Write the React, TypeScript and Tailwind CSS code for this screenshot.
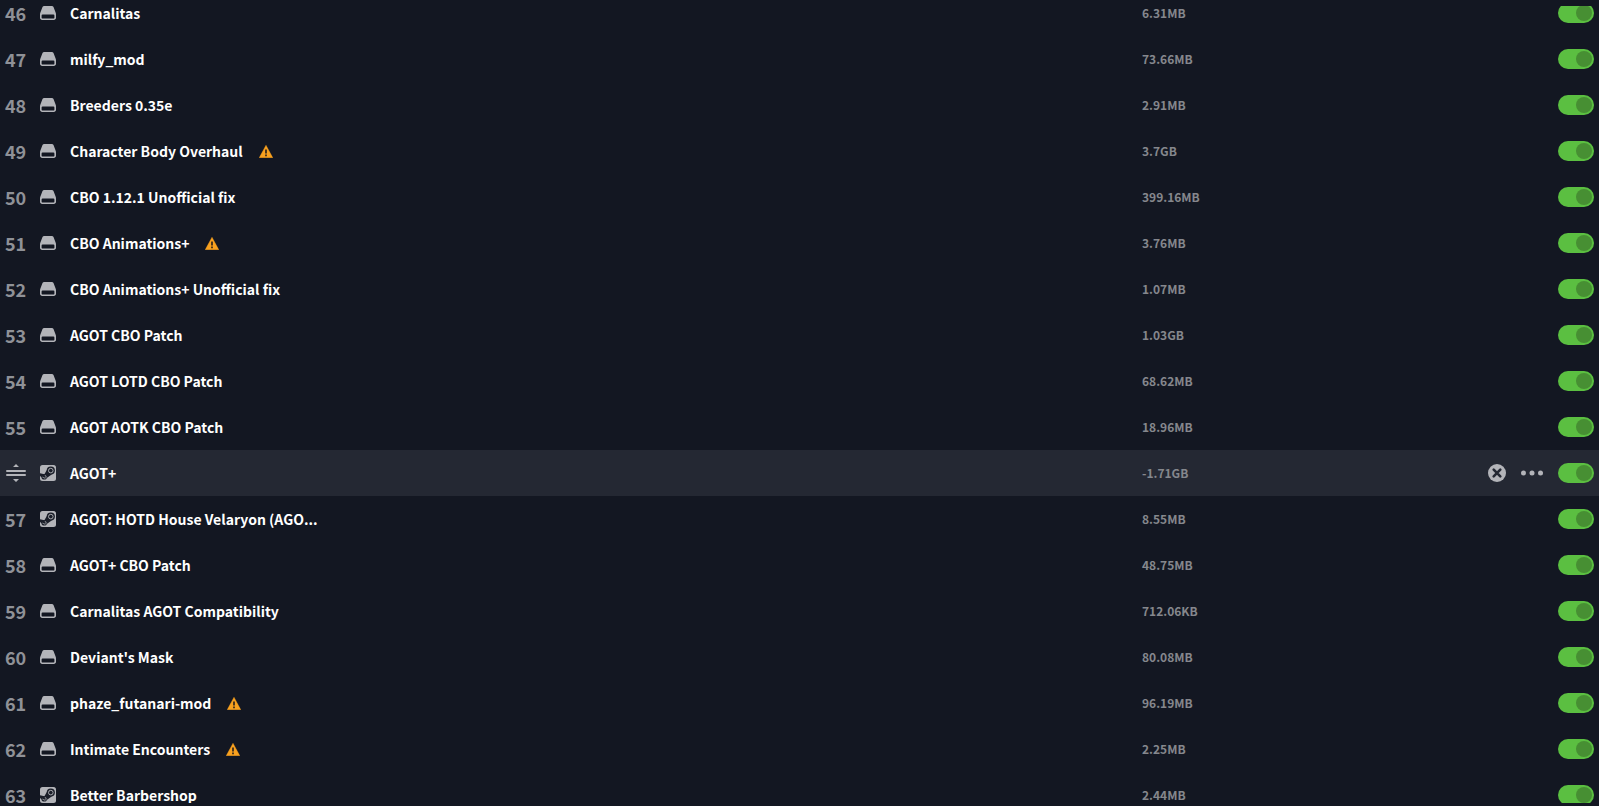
import { useState } from 'react';

type Mod = {
  position: number;
  name: string;
  size: string;
  source: 'local' | 'steam';
  warning?: boolean;
  active?: boolean;
};

const mods: Mod[] = [
  { position: 46, name: 'Carnalitas', size: '6.31MB', source: 'local' },
  { position: 47, name: 'milfy_mod', size: '73.66MB', source: 'local' },
  { position: 48, name: 'Breeders 0.35e', size: '2.91MB', source: 'local' },
  { position: 49, name: 'Character Body Overhaul', size: '3.7GB', source: 'local', warning: true },
  { position: 50, name: 'CBO 1.12.1 Unofficial fix', size: '399.16MB', source: 'local' },
  { position: 51, name: 'CBO Animations+', size: '3.76MB', source: 'local', warning: true },
  { position: 52, name: 'CBO Animations+ Unofficial fix', size: '1.07MB', source: 'local' },
  { position: 53, name: 'AGOT CBO Patch', size: '1.03GB', source: 'local' },
  { position: 54, name: 'AGOT LOTD CBO Patch', size: '68.62MB', source: 'local' },
  { position: 55, name: 'AGOT AOTK CBO Patch', size: '18.96MB', source: 'local' },
  { position: 56, name: 'AGOT+', size: '-1.71GB', source: 'steam', active: true },
  { position: 57, name: 'AGOT: HOTD House Velaryon (AGO...', size: '8.55MB', source: 'steam' },
  { position: 58, name: 'AGOT+ CBO Patch', size: '48.75MB', source: 'local' },
  { position: 59, name: 'Carnalitas AGOT Compatibility', size: '712.06KB', source: 'local' },
  { position: 60, name: "Deviant's Mask", size: '80.08MB', source: 'local' },
  { position: 61, name: 'phaze_futanari-mod', size: '96.19MB', source: 'local', warning: true },
  { position: 62, name: 'Intimate Encounters', size: '2.25MB', source: 'local', warning: true },
  { position: 63, name: 'Better Barbershop', size: '2.44MB', source: 'steam' },
];

function DriveIcon() {
  return (
    <svg viewBox="0 0 16 16" className="size-4 shrink-0" aria-hidden="true">
      <path
        fill="#b3b4b9"
        fillRule="evenodd"
        d="M4.200 1h7.600c.8 0 1.400.4 1.700 1.100l2.100 5.300c.3.700.4 1.300.4 2v3.400c0 1.300-1 2.200-2.200 2.200H2.200C1 15 0 14.100 0 12.800V9.400c0-.7.1-1.300.4-2l2.100-5.300C2.800 1.400 3.400 1 4.200 1ZM2.500 9.600c-.5 0-.9.4-.9.9v2c0 .6.4 1.100 1 1.100h10.800c.6 0 1-.5 1-1.100v-2c0-.5-.4-.9-.9-.9h-11Z"
      />
    </svg>
  );
}

function SteamIcon() {
  return (
    <svg viewBox="0 0 16 16" className="size-4 shrink-0" aria-hidden="true">
      <rect width="16" height="16" rx="2.500" fill="#b3b4b9" />
      <g fill="#1a1e29">
        <circle cx="10.800" cy="5.600" r="4.100" />
        <circle cx="4.200" cy="11.900" r="2.700" />
        <path d="M6.700 5.300 4.400 9.200 0 8.200v2.900l2.500 2 4.200-.2 5-3.300Z" />
      </g>
      <circle cx="10.800" cy="5.600" r="2.300" fill="none" stroke="#b3b4b9" strokeWidth=".9" />
      <path d="M2.400 12.100l1.600.7a1.300 1.300 0 1 0 .8-2.300" fill="none" stroke="#b3b4b9" strokeWidth=".7" />
    </svg>
  );
}

function WarningIcon() {
  return (
    <svg viewBox="0 0 14 13" className="h-[13px] w-[14px] shrink-0" role="img" aria-label="Warning">
      <path d="M7 .3 13.800 12.800H.2Z" fill="#f9a11f" stroke="#f9a11f" strokeWidth=".4" strokeLinejoin="round" />
      <path d="M6.100 4.500h1.800v4H6.100ZM6.100 9.500h1.800v1.700H6.100Z" fill="#3a2c1c" />
    </svg>
  );
}

function DragHandle() {
  return (
    <button type="button" aria-label="Reorder" className="block cursor-grab">
      <svg viewBox="0 0 22 18" className="h-[18px] w-[22px]" fill="#b3b4b9" aria-hidden="true">
        <path d="M11 0l3 3H8ZM11 18l3-3H8Z" />
        <rect x="1" y="6" width="20" height="2" rx="1" />
        <rect x="1" y="10" width="20" height="2" rx="1" />
      </svg>
    </button>
  );
}

function RowActions() {
  return (
    <div className="flex items-center gap-[15px]">
      <button type="button" aria-label="Remove">
        <svg viewBox="0 0 18 18" className="size-[18px]" aria-hidden="true">
          <circle cx="9" cy="9" r="9" fill="#b3b4b9" />
          <path d="M5.700 5.700l6.600 6.600M12.300 5.700l-6.600 6.600" stroke="#242833" strokeWidth="2.600" strokeLinecap="round" />
        </svg>
      </button>
      <button type="button" aria-label="More options">
        <svg viewBox="0 0 22 6" className="h-[6px] w-[22px]" fill="#b3b4b9" aria-hidden="true">
          <circle cx="2.500" cy="3" r="2.500" />
          <circle cx="11" cy="3" r="2.500" />
          <circle cx="19.500" cy="3" r="2.500" />
        </svg>
      </button>
    </div>
  );
}

function ModRow({ mod }: { mod: Mod }) {
  const [enabled, setEnabled] = useState(true);
  const id = `mod-${mod.position}`;

  return (
    <li className={`flex h-[46px] shrink-0 items-center pr-[5px] ${mod.active ? 'bg-[#242833]' : ''}`}>
      <div className="w-10 shrink-0 pl-[5px] text-lg leading-[14px] font-bold text-[#8f9197]">
        {mod.active ? <DragHandle /> : mod.position}
      </div>
      {mod.source === 'steam' ? <SteamIcon /> : <DriveIcon />}
      <div className="flex min-w-0 flex-1 items-center gap-4 pl-[14px]">
        <label htmlFor={id} className="text-sm leading-[14px] font-bold whitespace-nowrap text-white">
          {mod.name}
        </label>
        {mod.warning && <WarningIcon />}
      </div>
      <div className="flex w-[452px] shrink-0 items-center justify-between">
        <span className="text-xs leading-[14px] font-bold text-[#85878d]">{mod.size}</span>
        <div className="flex items-center gap-[15px]">
          {mod.active && <RowActions />}
          <input
            id={id}
            type="checkbox"
            role="switch"
            checked={enabled}
            onChange={(event) => setEnabled(event.target.checked)}
            className="flex h-5 w-9 cursor-pointer appearance-none items-center rounded-full bg-[#4a4d57] px-[2px] before:size-4 before:rounded-full before:bg-[#2f323b] checked:justify-end checked:bg-[#5bbf41] checked:before:bg-[#478f33]"
          />
        </div>
      </div>
    </li>
  );
}

export default function App() {
  return (
    <main className="flex h-screen flex-col bg-[#131722] pt-[6px] pb-[3px] font-['Noto_Sans_CJK_SC','Source_Sans_3',sans-serif]">
      <div className="min-h-0 flex-1 overflow-hidden">
        <ul className="-mt-4 flex flex-col">
          {mods.map((mod) => (
            <ModRow key={mod.position} mod={mod} />
          ))}
        </ul>
      </div>
    </main>
  );
}
